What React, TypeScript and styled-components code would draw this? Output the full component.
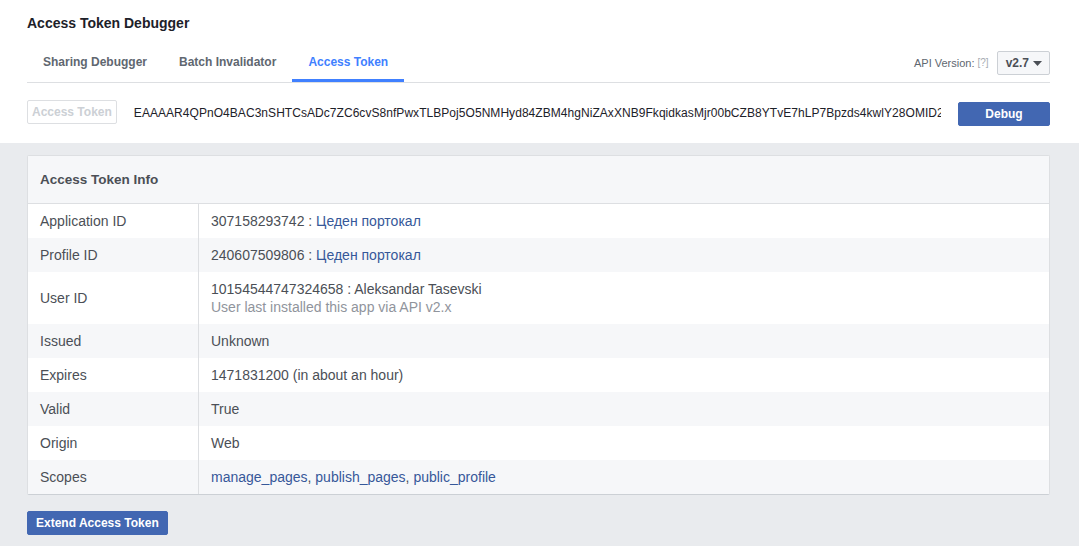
import React from 'react';
import styled, { createGlobalStyle } from 'styled-components';

const GlobalStyle = createGlobalStyle`
  html, body {
    margin: 0;
    padding: 0;
    background: #e9ebee;
    font-family: "Liberation Sans", Arial, Helvetica, sans-serif;
    color: #1d2129;
  }
`;

const TopSection = styled.div`
  background: #ffffff;
  padding: 14px 29px 17px 27px;
`;

const Title = styled.h1`
  margin: 0;
  font-size: 14px;
  line-height: 18px;
  font-weight: 700;
  color: #1d2129;
`;

const TabBar = styled.div`
  margin-top: 13px;
  display: flex;
  align-items: stretch;
  justify-content: space-between;
  height: 37px;
  border-bottom: 1px solid #dddfe2;
`;

const Tabs = styled.div`
  display: flex;
`;

const Tab = styled.div<{ $active?: boolean }>`
  display: flex;
  align-items: center;
  padding: 0 16px;
  font-size: 12px;
  font-weight: 700;
  color: ${(p) => (p.$active ? '#4080ff' : '#606770')};
  border-bottom: 3px solid ${(p) => (p.$active ? '#4080ff' : 'transparent')};
  cursor: pointer;
`;

const VersionBox = styled.div`
  display: flex;
  align-items: center;
  gap: 8px;
  padding-top: 2px;
  padding-bottom: 3px;
`;

const VersionLabel = styled.span`
  font-size: 11px;
  color: #606770;
`;

const Help = styled.span`
  color: #a7acb3;
  font-size: 10px;
  margin-left: 3px;
  position: relative;
  top: -1px;
`;

const VersionSelect = styled.div`
  display: flex;
  align-items: center;
  gap: 4px;
  height: 22px;
  padding: 0 7px 0 8px;
  border: 1px solid #ccd0d5;
  border-radius: 2px;
  background: #f6f7f9;
  font-size: 12px;
  font-weight: 700;
  color: #4b4f56;
`;

const TokenRow = styled.div`
  display: flex;
  align-items: center;
  margin-top: 17px;
  height: 26px;
`;

const TokenLabel = styled.div`
  height: 22px;
  line-height: 22px;
  padding: 0 4px;
  border: 1px solid #dddfe2;
  border-radius: 2px;
  font-size: 12px;
  font-weight: 700;
  color: #ccd0d5;
  flex-shrink: 0;
  align-self: flex-start;
`;

const TokenValue = styled.div`
  flex: 1;
  min-width: 0;
  margin-left: 17px;
  margin-right: 17px;
  font-size: 12px;
  color: #1d2129;
  white-space: nowrap;
  overflow: hidden;
  letter-spacing: 0.05px;
`;

const Button = styled.button<{ $width?: number }>`
  height: 24px;
  width: ${(p) => (p.$width ? `${p.$width}px` : 'auto')};
  padding: 0 8px;
  border: 1px solid #4267b2;
  border-radius: 2px;
  background: #4267b2;
  color: #ffffff;
  font-family: inherit;
  font-size: 12px;
  font-weight: 700;
  cursor: pointer;
  flex-shrink: 0;
`;

const DebugButton = styled(Button)`
  align-self: flex-end;
`;

const Content = styled.div`
  padding: 12px 29px 20px 27px;
`;

const Card = styled.div`
  background: #ffffff;
  border: 1px solid #dddfe2;
  border-bottom-color: #ccd0d5;
  border-radius: 2px;
`;

const CardHeader = styled.div`
  height: 47px;
  display: flex;
  align-items: center;
  padding: 0 12px;
  background: #f6f7f9;
  border-bottom: 1px solid #dddfe2;
  font-size: 13.5px;
  font-weight: 700;
  color: #4b4f56;
`;

const Row = styled.div<{ $alt?: boolean }>`
  display: grid;
  grid-template-columns: 171px 1fr;
  background: ${(p) => (p.$alt ? '#f6f7f9' : '#ffffff')};
`;

const Label = styled.div`
  padding: 8px 12px;
  font-size: 14px;
  line-height: 18px;
  color: #4b4f56;
  border-right: 1px solid #dddfe2;
  display: flex;
  align-items: center;
`;

const Value = styled.div`
  padding: 8px 12px;
  font-size: 14px;
  line-height: 18px;
  color: #4b4f56;
`;

const Link = styled.a`
  color: #365899;
  text-decoration: none;
  cursor: pointer;
`;

const Note = styled.div`
  color: #90949c;
`;

const Footer = styled.div`
  margin-top: 16px;
`;

const Caret = () => (
  <svg width="9" height="5" viewBox="0 0 9 5">
    <path d="M0 0h9L4.5 5z" fill="#4b4f56" />
  </svg>
);

const TOKEN =
  'EAAAAR4QPnO4BAC3nSHTCsADc7ZC6cvS8nfPwxTLBPoj5O5NMHyd84ZBM4hgNiZAxXNB9FkqidkasMjr00bCZB8YTvE7hLP7Bpzds4kwlY28OMID2N';

const App: React.FC = () => {
  return (
    <>
      <GlobalStyle />
      <TopSection>
        <Title>Access Token Debugger</Title>
        <TabBar>
          <Tabs>
            <Tab>Sharing Debugger</Tab>
            <Tab>Batch Invalidator</Tab>
            <Tab $active>Access Token</Tab>
          </Tabs>
          <VersionBox>
            <VersionLabel>
              API Version:<Help>[?]</Help>
            </VersionLabel>
            <VersionSelect>
              v2.7 <Caret />
            </VersionSelect>
          </VersionBox>
        </TabBar>
        <TokenRow>
          <TokenLabel>Access Token</TokenLabel>
          <TokenValue>{TOKEN}</TokenValue>
          <DebugButton $width={92}>Debug</DebugButton>
        </TokenRow>
      </TopSection>

      <Content>
        <Card>
          <CardHeader>Access Token Info</CardHeader>
          <Row>
            <Label>Application ID</Label>
            <Value>
              307158293742 : <Link>Цеден портокал</Link>
            </Value>
          </Row>
          <Row $alt>
            <Label>Profile ID</Label>
            <Value>
              240607509806 : <Link>Цеден портокал</Link>
            </Value>
          </Row>
          <Row>
            <Label>User ID</Label>
            <Value>
              10154544747324658 : Aleksandar Tasevski
              <Note>User last installed this app via API v2.x</Note>
            </Value>
          </Row>
          <Row $alt>
            <Label>Issued</Label>
            <Value>Unknown</Value>
          </Row>
          <Row>
            <Label>Expires</Label>
            <Value>1471831200 (in about an hour)</Value>
          </Row>
          <Row $alt>
            <Label>Valid</Label>
            <Value>True</Value>
          </Row>
          <Row>
            <Label>Origin</Label>
            <Value>Web</Value>
          </Row>
          <Row $alt>
            <Label>Scopes</Label>
            <Value>
              <Link>manage_pages</Link>, <Link>publish_pages</Link>, <Link>public_profile</Link>
            </Value>
          </Row>
        </Card>
        <Footer>
          <Button>Extend Access Token</Button>
        </Footer>
      </Content>
    </>
  );
};

export default App;
